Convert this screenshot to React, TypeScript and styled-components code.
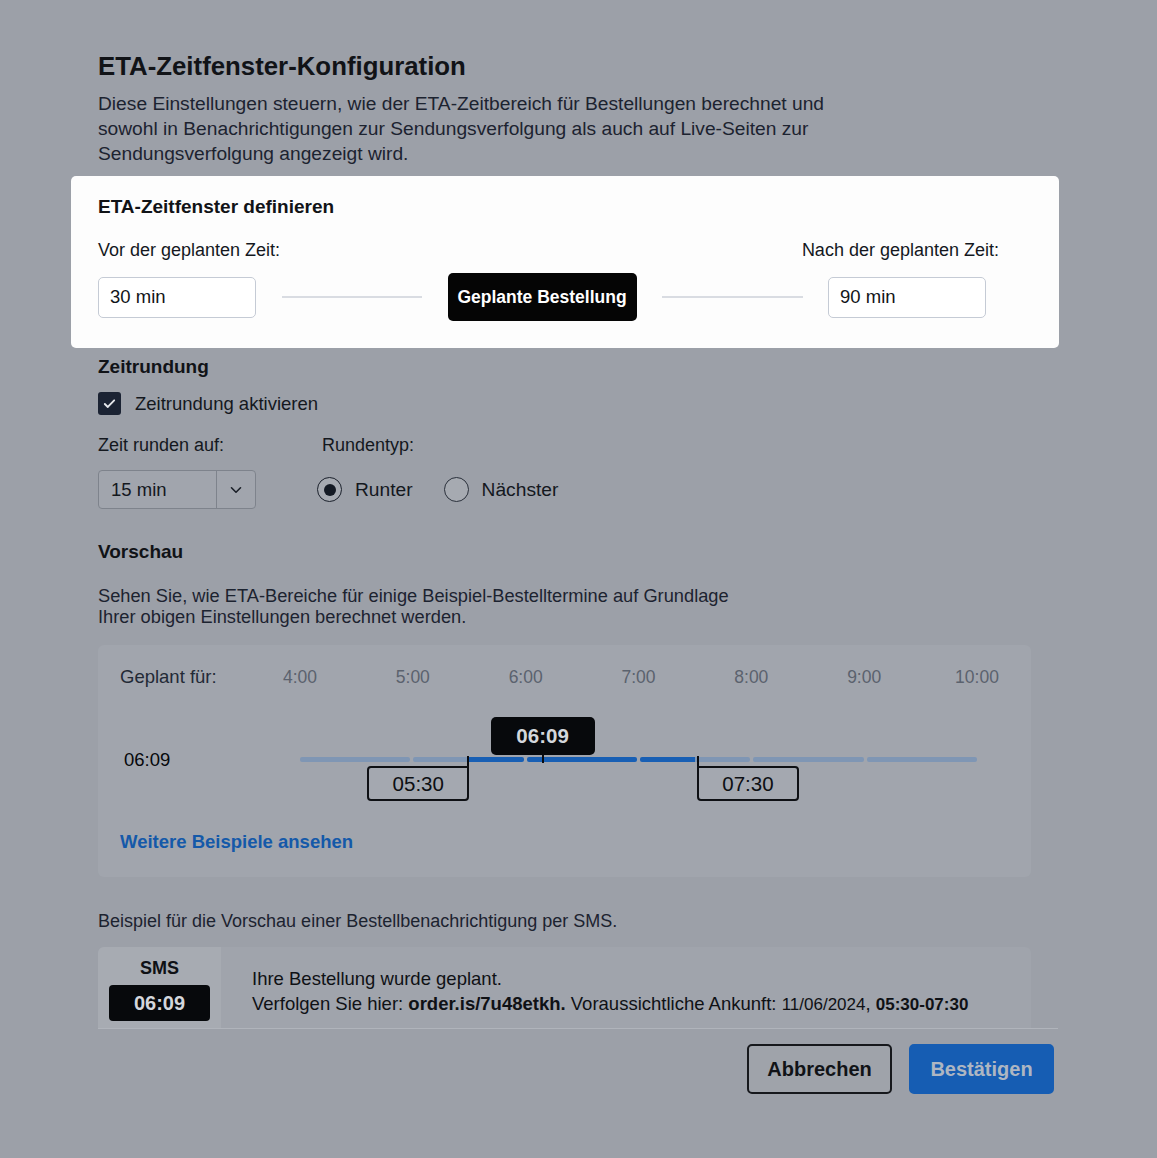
import React from 'react';
import styled, { createGlobalStyle } from 'styled-components';

const Global = createGlobalStyle`
  html, body { margin: 0; padding: 0; background: #9ca0a8; }
  body { font-family: "Liberation Sans", Arial, Helvetica, sans-serif; color: #15191f; }
  * { box-sizing: border-box; }
`;

const Page = styled.div`
  width: 1157px;
  min-height: 1158px;
  background: #9ca0a8;
  padding: 51px 0 0 98px;
`;

const Dialog = styled.div`
  width: 960px;
  display: flex;
  flex-direction: column;
`;

const Title = styled.h1`
  margin: 0;
  font-size: 25.8px;
  line-height: 30px;
  font-weight: 700;
  color: #111317;
`;

const Lead = styled.p`
  margin: 10px 0 0;
  font-size: 19.2px;
  line-height: 25px;
  color: #1c2330;
`;

const Spotlight = styled.section`
  margin: 10px 0 0 -27px;
  width: 988px;
  background: #fdfdfd;
  border-radius: 5px;
  padding: 19px 73px 27px 27px;
`;

const Heading = styled.h2<{ $top?: number }>`
  margin: ${p => p.$top ?? 0}px 0 0;
  font-size: 19px;
  line-height: 24px;
  font-weight: 700;
  color: #111317;
`;

const LabelRow = styled.div`
  display: flex;
  justify-content: space-between;
  margin: 20px -13px 0 0;
`;

const FieldLabel = styled.span`
  font-size: 18px;
  line-height: 22px;
  color: #14181e;
`;

const ControlRow = styled.div`
  display: flex;
  align-items: center;
  gap: 25.5px;
  margin-top: 12px;
  height: 48px;
`;

const TextBox = styled.div`
  width: 158px;
  height: 41px;
  border: 1.5px solid #c5cbd5;
  border-radius: 5px;
  background: #fff;
  display: flex;
  align-items: center;
  padding-left: 11px;
  font-size: 18.5px;
  color: #121418;
`;

const Connector = styled.div`
  flex: 1;
  height: 2px;
  background: #d9dce2;
`;

const AnchorButton = styled.div`
  height: 48px;
  width: 189px;
  border-radius: 5px;
  background: #050505;
  color: #fff;
  font-size: 17.5px;
  font-weight: 700;
  display: flex;
  align-items: center;
  justify-content: center;
  white-space: nowrap;
`;

const CheckRow = styled.label`
  display: flex;
  align-items: center;
  gap: 14px;
  margin-top: 13px;
  height: 23px;
  font-size: 18.5px;
  color: #14181e;
`;

const CheckBox = styled.span`
  width: 23px;
  height: 23px;
  border-radius: 3px;
  background: #1b2333;
  display: flex;
  align-items: center;
  justify-content: center;
`;

const RoundingGrid = styled.div`
  display: grid;
  grid-template-columns: 158px auto;
  column-gap: 66px;
  row-gap: 14px;
  margin-top: 19px;
  justify-content: start;
  align-items: center;
`;

const Select = styled.div`
  width: 158px;
  height: 39px;
  border: 1px solid #7e838c;
  border-radius: 4px;
  background: #a1a5ad;
  display: flex;
`;

const SelectValue = styled.div`
  flex: 1;
  display: flex;
  align-items: center;
  padding-left: 12px;
  font-size: 18.5px;
  color: #14181e;
  border-right: 1px solid #7e838c;
`;

const SelectArrow = styled.div`
  width: 38px;
  display: flex;
  align-items: center;
  justify-content: center;
`;

const RadioGroup = styled.div`
  display: flex;
  align-items: center;
  margin-left: -5px;
  gap: 31px;
`;

const RadioOption = styled.label`
  display: flex;
  align-items: center;
  gap: 13px;
  font-size: 19.2px;
  color: #14181e;
`;

const RadioCircle = styled.span<{ $checked?: boolean }>`
  width: 25px;
  height: 25px;
  border-radius: 50%;
  border: 1.5px solid ${p => (p.$checked ? '#1a202b' : '#2a303b')};
  background: #a6aab1;
  display: flex;
  align-items: center;
  justify-content: center;
  &::after {
    content: '';
    width: 12px;
    height: 12px;
    border-radius: 50%;
    background: #141a24;
    display: ${p => (p.$checked ? 'block' : 'none')};
  }
`;

const Note = styled.p<{ $top: number; $lh?: number; $size?: number }>`
  margin: ${p => p.$top}px 0 0;
  font-size: ${p => p.$size ?? 18}px;
  line-height: ${p => p.$lh ?? 22}px;
  color: #1c2330;
`;

const PreviewCard = styled.div`
  margin-top: 18.5px;
  width: 933px;
  background: #a1a5ad;
  border-radius: 6px;
  padding: 21px 0 24px 22px;
  display: flex;
  flex-direction: column;
`;

const TimelineRow = styled.div<{ $top?: number }>`
  display: flex;
  align-items: flex-start;
  margin-top: ${p => p.$top ?? 0}px;
`;

const RowLabel = styled.div<{ $pad?: number; $strong?: boolean }>`
  width: 180px;
  font-size: 18.5px;
  line-height: 22px;
  padding-top: ${p => p.$pad ?? 0}px;
  padding-left: ${p => (p.$strong ? 4 : 0)}px;
  color: ${p => (p.$strong ? '#06080b' : '#232a36')};
`;

const Axis = styled.div`
  position: relative;
  width: 677px;
  height: 22px;
`;

const HourTick = styled.span`
  position: absolute;
  top: 0;
  transform: translateX(-50%);
  font-size: 17.5px;
  line-height: 22px;
  color: #5b626e;
  white-space: nowrap;
`;

const Chart = styled.div`
  position: relative;
  width: 677px;
  height: 84px;
`;

const Track = styled.div`
  position: absolute;
  left: 0;
  right: 0;
  top: 40px;
  height: 5px;
  display: flex;
  gap: 3px;
`;

const Segment = styled.div`
  flex: 1;
  height: 100%;
  border-radius: 2px;
`;

const NowTag = styled.div`
  position: absolute;
  top: 0;
  width: 104px;
  height: 38px;
  transform: translateX(-50%);
  background: #07090c;
  border-radius: 5px;
  color: #d4d7dc;
  font-size: 20.5px;
  font-weight: 700;
  display: flex;
  align-items: center;
  justify-content: center;
`;

const Stem = styled.div<{ $top: number; $h: number; $shift: number }>`
  position: absolute;
  top: ${p => p.$top}px;
  height: ${p => p.$h}px;
  width: 2px;
  background: #0a0c10;
  transform: translateX(${p => p.$shift}px);
`;

const BoundTag = styled.div<{ $side: 'start' | 'end' }>`
  position: absolute;
  top: 49px;
  width: 102px;
  height: 35px;
  border: 2px solid #0e1014;
  border-radius: 4px;
  ${p => (p.$side === 'start' ? 'border-top-right-radius: 0; transform: translateX(-100%);' : 'border-top-left-radius: 0;')}
  background: rgba(255, 255, 255, 0.04);
  color: #0d0f13;
  font-size: 20.5px;
  display: flex;
  align-items: center;
  justify-content: center;
`;

const MoreLink = styled.a`
  margin-top: 30px;
  font-size: 18.5px;
  line-height: 22px;
  font-weight: 700;
  color: #1459a9;
  text-decoration: none;
`;

const SmsCard = styled.div`
  margin-top: 15px;
  width: 933px;
  height: 81px;
  background: #a0a4ac;
  border-radius: 6px 6px 0 0;
  display: flex;
  overflow: hidden;
`;

const SmsSide = styled.div`
  width: 123px;
  background: #a7abb2;
  display: flex;
  flex-direction: column;
  align-items: center;
  padding-top: 11px;
  gap: 7px;
`;

const SmsTitle = styled.div`
  font-size: 18px;
  line-height: 20px;
  font-weight: 700;
  color: #0f1115;
`;

const SmsClock = styled.div`
  width: 101px;
  height: 36px;
  border-radius: 4px;
  background: #07090c;
  color: #d4d7dc;
  font-size: 20px;
  font-weight: 700;
  display: flex;
  align-items: center;
  justify-content: center;
`;

const SmsBody = styled.div`
  padding: 18.5px 0 0 31px;
  font-size: 18.5px;
  line-height: 25px;
  color: #0f1115;
  white-space: nowrap;
`;

const Small = styled.span<{ $bold?: boolean }>`
  font-size: 17px;
  font-weight: ${p => (p.$bold ? 700 : 400)};
`;

const Footer = styled.div`
  border-top: 1px solid #b0b4bb;
  display: flex;
  justify-content: flex-end;
  gap: 17px;
  padding: 15px 4px 0 0;
`;

const Button = styled.button<{ $primary?: boolean }>`
  width: 145px;
  height: 50px;
  border-radius: 5px;
  font-family: inherit;
  font-size: 20px;
  font-weight: 700;
  border: 2px solid ${p => (p.$primary ? '#165db3' : '#16181c')};
  background: ${p => (p.$primary ? '#165db3' : 'rgba(255,255,255,0.03)')};
  color: ${p => (p.$primary ? '#aeb6c2' : '#111317')};
  padding: 0;
`;

const START = 4;
const END = 10;
const RANGE: [number, number] = [5.5, 7.5];
const SCHEDULED = 6.15;
const LIGHT = '#7f96b4';
const DARK = '#185fb4';

const pct = (h: number) => ((h - START) / (END - START)) * 100;

function segmentBackground(k: number) {
  const s = START + k;
  const a = Math.min(Math.max(RANGE[0] - s, 0), 1) * 100;
  const b = Math.min(Math.max(RANGE[1] - s, 0), 1) * 100;
  return `linear-gradient(to right, ${LIGHT} 0%, ${LIGHT} ${a}%, ${DARK} ${a}%, ${DARK} ${b}%, ${LIGHT} ${b}%, ${LIGHT} 100%)`;
}

const Check = () => (
  <svg width="15" height="15" viewBox="0 0 16 16" fill="none">
    <path d="M3 8.5l3.2 3.2L13 4.6" stroke="#e4e6ea" strokeWidth="2" strokeLinecap="round" strokeLinejoin="round" />
  </svg>
);

const Chevron = () => (
  <svg width="12" height="8" viewBox="0 0 12 8" fill="none">
    <path d="M1.5 1.8L6 6.2l4.5-4.4" stroke="#1a1f28" strokeWidth="1.6" strokeLinecap="round" strokeLinejoin="round" />
  </svg>
);

export default function App() {
  const hours = ['4:00', '5:00', '6:00', '7:00', '8:00', '9:00', '10:00'];
  return (
    <Page>
      <Global />
      <Dialog>
        <Title>ETA-Zeitfenster-Konfiguration</Title>
        <Lead>
          Diese Einstellungen steuern, wie der ETA-Zeitbereich für Bestellungen berechnet und
          <br />
          sowohl in Benachrichtigungen zur Sendungsverfolgung als auch auf Live-Seiten zur
          <br />
          Sendungsverfolgung angezeigt wird.
        </Lead>

        <Spotlight>
          <Heading>ETA-Zeitfenster definieren</Heading>
          <LabelRow>
            <FieldLabel>Vor der geplanten Zeit:</FieldLabel>
            <FieldLabel>Nach der geplanten Zeit:</FieldLabel>
          </LabelRow>
          <ControlRow>
            <TextBox>30 min</TextBox>
            <Connector />
            <AnchorButton>Geplante Bestellung</AnchorButton>
            <Connector />
            <TextBox>90 min</TextBox>
          </ControlRow>
        </Spotlight>

        <Heading $top={7}>Zeitrundung</Heading>
        <CheckRow>
          <CheckBox>
            <Check />
          </CheckBox>
          Zeitrundung aktivieren
        </CheckRow>

        <RoundingGrid>
          <FieldLabel>Zeit runden auf:</FieldLabel>
          <FieldLabel>Rundentyp:</FieldLabel>
          <Select>
            <SelectValue>15 min</SelectValue>
            <SelectArrow>
              <Chevron />
            </SelectArrow>
          </Select>
          <RadioGroup>
            <RadioOption>
              <RadioCircle $checked />
              Runter
            </RadioOption>
            <RadioOption>
              <RadioCircle />
              Nächster
            </RadioOption>
          </RadioGroup>
        </RoundingGrid>

        <Heading $top={31}>Vorschau</Heading>
        <Note $top={20.5} $lh={21} $size={18.25}>
          Sehen Sie, wie ETA-Bereiche für einige Beispiel-Bestelltermine auf Grundlage
          <br />
          Ihrer obigen Einstellungen berechnet werden.
        </Note>

        <PreviewCard>
          <TimelineRow>
            <RowLabel>Geplant für:</RowLabel>
            <Axis>
              {hours.map((h, i) => (
                <HourTick key={h} style={{ left: `${(i / 6) * 100}%` }}>
                  {h}
                </HourTick>
              ))}
            </Axis>
          </TimelineRow>
          <TimelineRow $top={29}>
            <RowLabel $pad={32} $strong>
              06:09
            </RowLabel>
            <Chart>
              <Track>
                {[0, 1, 2, 3, 4, 5].map(k => (
                  <Segment key={k} style={{ background: segmentBackground(k) }} />
                ))}
              </Track>
              <NowTag style={{ left: `${pct(SCHEDULED)}%` }}>06:09</NowTag>
              <Stem $top={38} $h={8} $shift={-1} style={{ left: `${pct(SCHEDULED)}%` }} />
              <Stem $top={39} $h={12} $shift={-2} style={{ left: `${pct(RANGE[0])}%` }} />
              <BoundTag $side="start" style={{ left: `${pct(RANGE[0])}%` }}>
                05:30
              </BoundTag>
              <Stem $top={39} $h={12} $shift={2} style={{ left: `${pct(RANGE[1])}%` }} />
              <BoundTag $side="end" style={{ left: `calc(${pct(RANGE[1])}% + 2px)` }}>
                07:30
              </BoundTag>
            </Chart>
          </TimelineRow>
          <MoreLink href="#">Weitere Beispiele ansehen</MoreLink>
        </PreviewCard>

        <Note $top={33}>Beispiel für die Vorschau einer Bestellbenachrichtigung per SMS.</Note>

        <SmsCard>
          <SmsSide>
            <SmsTitle>SMS</SmsTitle>
            <SmsClock>06:09</SmsClock>
          </SmsSide>
          <SmsBody>
            Ihre Bestellung wurde geplant.
            <br />
            Verfolgen Sie hier: <b>order.is/7u48etkh.</b> Voraussichtliche Ankunft: <Small>11/06/2024</Small>,{' '}
            <Small $bold>05:30-07:30</Small>
          </SmsBody>
        </SmsCard>

        <Footer>
          <Button>Abbrechen</Button>
          <Button $primary>Bestätigen</Button>
        </Footer>
      </Dialog>
    </Page>
  );
}
